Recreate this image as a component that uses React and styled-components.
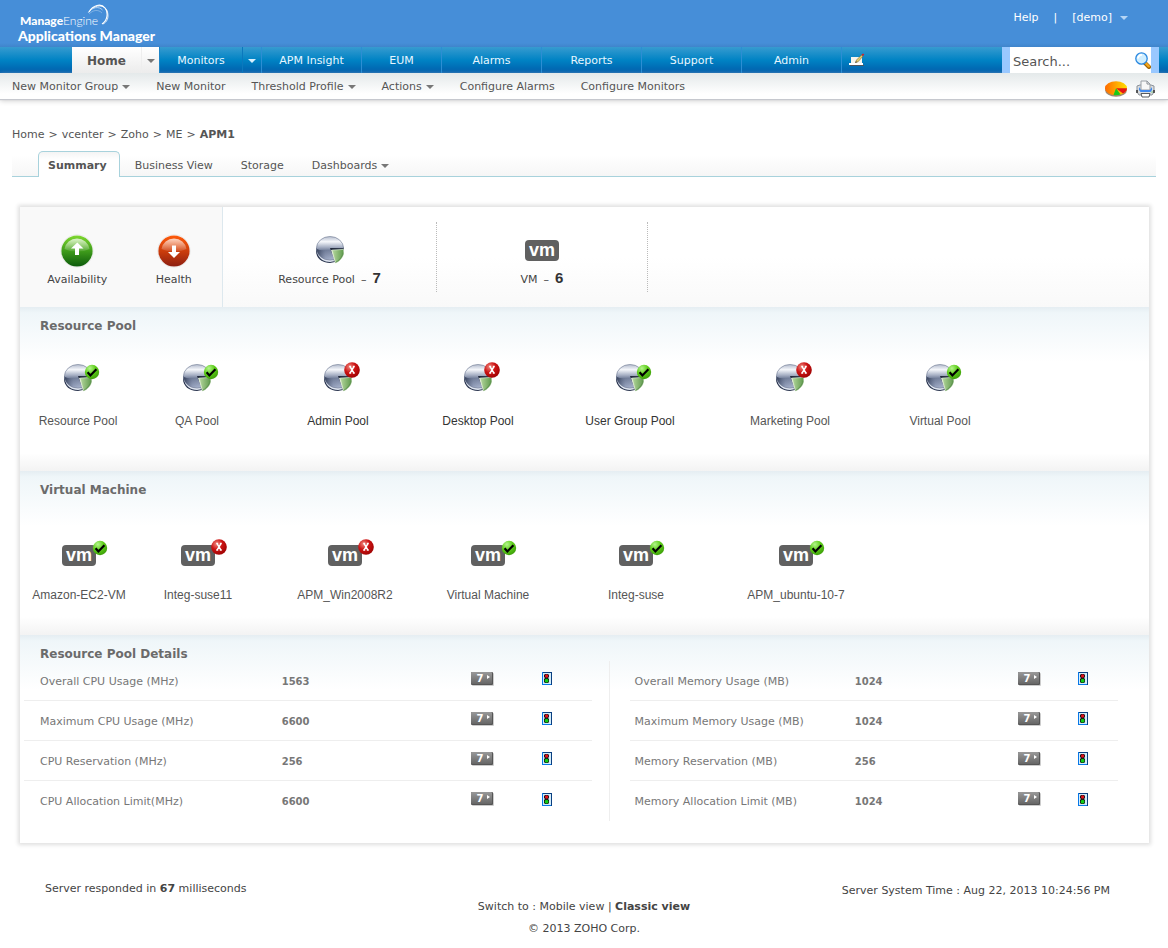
import React from "react";
import styled, { createGlobalStyle, css } from "styled-components";

const sans = `"DejaVu Sans", Verdana, sans-serif`;
const arial = `"Liberation Sans", Arial, sans-serif`;

const GlobalStyle = createGlobalStyle`
  * { box-sizing: border-box; }
  body { margin: 0; background: #fff; color: #555; font: 11px/16px ${sans}; }
  a { color: inherit; text-decoration: none; }
  button { font: inherit; color: inherit; background: none; border: 0; padding: 0; cursor: pointer; }
  svg { display: block; flex: none; }
`;

/* ---------- header ---------- */

const Header = styled.header`
  display: flex;
  justify-content: space-between;
  height: 47px;
  padding: 0 40px 0 18px;
  background: linear-gradient(#468ed8 43px, #3f84cb);
  color: #fff;
`;

const Brand = styled.a`
  position: relative;
  padding-top: 13px;
  font-family: Lato, "Open Sans", sans-serif;
`;

const BrandMaker = styled.div`
  padding-left: 2px;
  font-size: 12px;
  line-height: 15px;
  font-weight: 300;
  b { font-weight: 900; }
`;

const BrandProduct = styled.div`
  font-size: 14px;
  line-height: 16px;
  font-weight: 900;
`;

const Swoosh = styled.svg`
  position: absolute;
  left: 69px;
  top: 4px;
`;

const UserLinks = styled.div`
  display: flex;
  align-items: center;
  gap: 15px;
  height: 35px;
`;

const Split = styled.span`
  display: inline-flex;
  align-items: center;
  gap: ${(p) => p.$gap || 4}px;
`;

const CaretSvg = styled.svg`
  fill: ${(p) => p.$color || "#777"};
`;

const Caret = ({ color }) => (
  <CaretSvg $color={color} width="8" height="4" viewBox="0 0 8 4" aria-hidden="true">
    <path d="M0 0h8L4 4z" />
  </CaretSvg>
);

/* ---------- main navigation ---------- */

const NavBar = styled.nav`
  display: flex;
  height: 26px;
  padding-left: 72px;
  background: linear-gradient(#379bd0, #0083c4 50%, #005dab);
`;

const NavItem = styled.a`
  display: flex;
  align-items: center;
  justify-content: center;
  width: ${(p) => p.$width}px;
  padding-top: 1px;
  color: #e8f6ff;
  ${(p) => p.$line && css`border-right: 1px solid #2c8ed3;`}
  ${(p) =>
    p.$active &&
    css`
      background: linear-gradient(#fff, #ececec);
      color: #555;
      font-size: 12px;
      font-weight: bold;
    `}
`;

const NavCaret = styled.button`
  display: flex;
  align-items: center;
  justify-content: center;
  width: ${(p) => p.$width}px;
  padding-top: 2px;
  border-left: 1px solid ${(p) => (p.$active ? "#eee" : "#0b78bd")};
  border-right: 1px solid ${(p) => (p.$active ? "#1d85c6" : "#2c8ed3")};
  ${(p) => p.$active && css`background: linear-gradient(#fff, #ececec);`}
`;

const NavTool = styled.button`
  display: flex;
  align-items: center;
  padding: 0 7px;
`;

const SearchForm = styled.form`
  display: flex;
  align-items: center;
  width: 157px;
  margin: 0 9px 0 auto;
  border: solid #99c8ff;
  border-width: 0 8px;
  background: #fff;
`;

const SearchInput = styled.input`
  flex: 1;
  min-width: 0;
  height: 26px;
  padding: 3px 3px 0;
  border: 0;
  outline: 0;
  background: transparent;
  color: #555;
  font: 13px/20px ${sans};
  &::placeholder { color: #555; opacity: 1; }
`;

/* ---------- secondary bar ---------- */

const SubBar = styled.div`
  display: flex;
  align-items: center;
  gap: 26px;
  height: 26px;
  padding: 2px 13px 0 12px;
  background: linear-gradient(#e4e9ea, #fff 80%);
  box-shadow: 0 1px 1px #c6c8ce, 0 2px 5px #d0d0d0;
`;

const SubTools = styled.div`
  display: flex;
  align-items: center;
  gap: 9px;
  margin-left: auto;
  padding-top: 3px;
`;

/* ---------- page ---------- */

const Main = styled.main`
  padding: 28px 12px 0;
`;

const Crumbs = styled.nav`
  a::after { content: ">"; margin: 0 4px; }
`;

const TabRow = styled.div`
  display: flex;
  align-items: flex-end;
  height: 26px;
  margin-top: 8px;
  padding-left: 26px;
  border-bottom: 1px solid #a8d2dc;
  background: linear-gradient(#fff 4px, #f6f6f6);
`;

const ActiveTab = styled.a`
  height: 26px;
  margin-bottom: -1px;
  padding: 6px 12px 0 9px;
  border: 1px solid #a8d2dc;
  border-bottom: 0;
  border-radius: 5px 5px 0 0;
  background: linear-gradient(#f4f4f4, #fff 8px);
  font-weight: bold;
`;

const Tabs = styled.div`
  display: flex;
  gap: 28px;
  padding: 0 0 2px 15px;
`;

const Card = styled.article`
  margin: 30px 7px 0 8px;
  background: #fff;
  box-shadow: 0 0 4px 2px #e0e0e0;
`;

const Overview = styled.section`
  display: flex;
  height: 100px;
  background: linear-gradient(#fff 50%, #f9f9f9);
`;

const StatusPane = styled.div`
  display: grid;
  grid-template-columns: 1fr 1fr;
  width: 203px;
  padding: 27px 0 0 9px;
  border-right: 1px solid #dde8ee;
  background: #f9f9f9;
`;

const Stat = styled.div`
  display: flex;
  flex-direction: column;
  align-items: center;
  gap: 4px;
  color: #444;
`;

const StatIcon = styled.div`
  display: flex;
  align-items: center;
  height: 34px;
`;

const CountPane = styled.div`
  width: ${(p) => p.$width}px;
  height: 70px;
  margin-top: 15px;
  padding-top: 11px;
  border-right: 1px dotted #bbb;
`;

const CountLine = styled.div`
  display: flex;
  align-items: baseline;
  gap: 6px;
  b { font: bold 15px/14px ${arial}; color: #333; }
`;

const Section = styled.section`
  padding-top: 12px;
  background: linear-gradient(#e5edf2, #eff6f9 6px, #fff 55px);
`;

const Title = styled.h2`
  margin: 0 0 0 20px;
  font-size: 12px;
  line-height: 14px;
  color: #6b6b6b;
`;

const ItemGrid = styled.ul`
  display: grid;
  grid-template-columns: ${(p) => p.$columns};
  height: ${(p) => p.$height}px;
  margin: 0;
  padding: ${(p) => p.$top}px 0 0;
  list-style: none;
  background: linear-gradient(to top, #f3f3f3, rgba(255, 255, 255, 0) 18px);
`;

const Item = styled.li`
  display: flex;
  flex-direction: column;
  align-items: center;
  gap: ${(p) => p.$gap}px;
  font: 12px/16px ${arial};
  color: ${(p) => (p.$dark ? "#333" : "#555")};
  white-space: nowrap;
`;

const IconHolder = styled.div`
  position: relative;
`;

const BadgeHolder = styled.div`
  position: absolute;
  right: ${(p) => p.$right}px;
  top: ${(p) => p.$top}px;
`;

const Details = styled.div`
  display: flex;
  padding: 0 31px 22px 4px;
`;

const DetailHalf = styled.div`
  flex: ${(p) => p.$share};
  min-width: 0;
  padding: ${(p) => p.$pad};
  ${(p) => p.$line && css`border-right: 1px solid #eee;`}
`;

const Table = styled.table`
  width: 100%;
  table-layout: fixed;
  border-collapse: separate;
  border-spacing: 0;
  color: #777;
`;

const LabelHead = styled.th`
  width: ${(p) => p.$width}%;
  height: 40px;
  padding: 2px 0 0 ${(p) => p.$indent}px;
  text-align: left;
  font-weight: normal;
  border-bottom: ${(p) => (p.$last ? "0" : "1px solid #eee")};
`;

const Cell = styled.td`
  width: ${(p) => p.$width}%;
  height: 40px;
  padding: ${(p) => (p.$icon ? "0 0 4px" : "2px 0 0")};
  font-size: 10px;
  font-weight: bold;
  border-bottom: ${(p) => (p.$last ? "0" : "1px solid #eee")};
  button { display: block; }
`;

const Footer = styled.footer`
  display: grid;
  grid-template-columns: 1fr auto 1fr;
  padding: 38px 58px 10px 45px;
  color: #444;
`;

const FootCenter = styled.div`
  padding: 15px 0 0 13px;
  text-align: center;
  line-height: 22px;
`;

const FootRight = styled.div`
  padding-top: 2px;
  text-align: right;
`;

/* ---------- drawings ---------- */

const DefsSvg = styled.svg`
  position: absolute;
`;

const Gradients = () => (
  <DefsSvg width="0" height="0" aria-hidden="true">
    <defs>
      <linearGradient id="steel" x1="0" y1="0" x2="0" y2="1">
        <stop offset="0" stopColor="#b4bccd" />
        <stop offset=".22" stopColor="#f5f7fb" />
        <stop offset=".45" stopColor="#a7b0c4" />
        <stop offset=".58" stopColor="#75819c" />
        <stop offset="1" stopColor="#aab5cf" />
      </linearGradient>
      <linearGradient id="steelSide" x1="0" x2="1">
        <stop offset="0" stopColor="#1f2a44" stopOpacity=".75" />
        <stop offset=".5" stopColor="#5a6684" stopOpacity=".2" />
        <stop offset="1" stopColor="#8592b0" stopOpacity="0" />
      </linearGradient>
      <linearGradient id="leaf" x1="0" x2="1">
        <stop offset="0" stopColor="#b5d79d" />
        <stop offset="1" stopColor="#5f9a4d" />
      </linearGradient>
      <linearGradient id="greenBall" x1="0" y1="0" x2="0" y2="1">
        <stop offset="0" stopColor="#7fd82f" />
        <stop offset=".5" stopColor="#3f9c1b" />
        <stop offset="1" stopColor="#0c5a0c" />
      </linearGradient>
      <linearGradient id="redBall" x1="0" y1="0" x2="0" y2="1">
        <stop offset="0" stopColor="#ff5a0a" />
        <stop offset=".55" stopColor="#c63a0c" />
        <stop offset="1" stopColor="#8c1f12" />
      </linearGradient>
      <linearGradient id="gloss" x1="0" y1="0" x2="0" y2="1">
        <stop offset="0" stopColor="#fff" stopOpacity=".75" />
        <stop offset="1" stopColor="#fff" stopOpacity=".08" />
      </linearGradient>
      <radialGradient id="okBadge" cx=".35" cy=".25" r=".8">
        <stop offset="0" stopColor="#b4f58c" />
        <stop offset=".5" stopColor="#5ccc18" />
        <stop offset="1" stopColor="#3c9c08" />
      </radialGradient>
      <radialGradient id="badBadge" cx=".35" cy=".3" r=".8">
        <stop offset="0" stopColor="#f08a80" />
        <stop offset=".45" stopColor="#cc1414" />
        <stop offset="1" stopColor="#980000" />
      </radialGradient>
      <linearGradient id="chip" x1="0" y1="0" x2="0" y2="1">
        <stop offset="0" stopColor="#999" />
        <stop offset="1" stopColor="#666" />
      </linearGradient>
      <linearGradient id="citrus" x1="0" x2="1">
        <stop offset="0" stopColor="#ff6a00" />
        <stop offset="1" stopColor="#ffe000" />
      </linearGradient>
    </defs>
  </DefsSvg>
);

const Ball = ({ down }) => (
  <svg width="34" height="34" viewBox="0 0 34 34" aria-hidden="true">
    <circle cx="17" cy="17" r="16.3" fill="#fff" stroke="#ddd" strokeWidth=".6" />
    <circle cx="17" cy="17" r="15.6" fill={down ? "url(#redBall)" : "url(#greenBall)"} />
    <path d="M4.5 15a12.6 12 0 0 1 25 0q-5 2.500-12.500 2.500t-12.500-2.500z" fill="url(#gloss)" />
    <path
      d={down ? "M15 11.500h4v6.500h4l-6 6-6-6h4z" : "M15 21v-6.500h-4l6.300-6 6.200 6H19V21z"}
      fill="#fff"
    />
  </svg>
);

const Pie = () => (
  <svg width="28" height="28" viewBox="0 0 28 28" aria-hidden="true">
    <path d="M0 12v3c0 7 6 12 14 12l5-1 8.500-12V11z" fill="#2b3650" />
    <path d="M1 15.500c1 6.500 6.500 10.500 13 10.500l4-.7-.5-3L14 22z" fill="#dfe5f0" />
    <ellipse cx="14" cy="12.300" rx="13.600" ry="11.800" fill="url(#steel)" stroke="#7c869d" strokeWidth=".7" />
    <path d="M.8 13q6 2.500 13.400 0l4 10.500A13.500 11.500 0 0 1 .8 13z" fill="url(#steelSide)" />
    <path d="M27.600 12.200 14 12l4.500 12 2-.5L16 13.800l11.500-.3z" fill="#20283a" />
    <path d="M18 14.800l-3-1 4.200 13.200 2.300-1z" fill="#f3f8ef" />
    <path d="M16.200 14.200l11.400-.8v4.300c-.8 4-4 7.500-8 9.300z" fill="url(#leaf)" stroke="#d2e6c6" strokeWidth=".7" />
    <path d="M27.500 14.500v3.200c-.8 4-4 7.500-8 9.300l-.3-1c4-2 7.300-5.500 8.300-11.500z" fill="#447b39" opacity=".55" />
  </svg>
);

const VmIcon = () => (
  <svg width="34" height="21" viewBox="0 0 34 21" aria-hidden="true">
    <rect width="34" height="21" rx="4" fill="#606060" />
    <text x="17" y="16" textAnchor="middle" fontFamily="Liberation Sans, Arial, sans-serif" fontWeight="bold" fontSize="18" fill="#fff">
      vm
    </text>
  </svg>
);

const StatusBadge = ({ ok }) =>
  ok ? (
    <svg width="16" height="16" viewBox="0 0 16 16" role="img" aria-label="Up">
      <circle cx="8" cy="8" r="7.200" fill="url(#okBadge)" />
      <path d="M3.600 8.200l2.800 3.200 6-6.200" fill="none" stroke="#000" strokeWidth="2.200" />
    </svg>
  ) : (
    <svg width="16" height="16" viewBox="0 0 16 16" role="img" aria-label="Down">
      <circle cx="8" cy="8" r="7.800" fill="url(#badBadge)" />
      <path d="M5.200 4.500h2M8.800 4.500h2M5.200 11h2M8.800 11h2M6.200 4.800l3.600 6M9.800 4.800l-3.600 6" stroke="#fff" strokeWidth="1.500" />
    </svg>
  );

const SevenDays = () => (
  <svg width="23" height="14" viewBox="0 0 23 14" aria-hidden="true">
    <rect x="1" y="1" width="22" height="13" rx="1" fill="#ccc" />
    <rect width="22" height="13" rx="1" fill="#555" />
    <rect x="0" y="0" width="21" height="12" rx="1" fill="url(#chip)" />
    <text x="9" y="10" textAnchor="middle" fontFamily="DejaVu Sans, sans-serif" fontWeight="bold" fontSize="10" fill="#fff">
      7
    </text>
    <path d="M16 3l3 2-3 2z" fill="#fff" />
  </svg>
);

const TrafficLight = () => (
  <svg width="10" height="13" viewBox="0 0 10 13" aria-hidden="true">
    <rect width="10" height="13" fill="#0a3f80" />
    <path d="M0 0h1v12h8v1H0z" fill="#0878e8" />
    <rect x="1" y="1" width="8" height="11" fill="#d3ecfa" />
    <path d="M3 2h3l1 1v2l-1 1 1 1v3l-1 1H3l-1-1V7l1-1-1-1V3z" fill="#151515" />
    <circle cx="4.600" cy="4" r="1.700" fill="#e0101c" />
    <circle cx="4.600" cy="8.700" r="1.900" fill="#10cc18" />
  </svg>
);

const NotePencil = () => (
  <svg width="16" height="14" viewBox="0 0 16 14" aria-hidden="true">
    <path d="M2 4h11v7H2z" fill="#f5f5ee" />
    <path d="M0 10h14v2H0z" fill="#fff" />
    <path d="M1 12h14v1H1z" fill="#4b5560" />
    <path d="M6.500 9.500l1-2.500 5-5 1.500 1.200L9 8.800z" fill="#e8cf6a" stroke="#5b4a1c" strokeWidth=".5" />
    <path d="M12.500 1.800L14 .5l1.300 1L14 3z" fill="#d0222c" />
    <path d="M6.300 9.800l.6-1.500 1 .9z" fill="#222" />
  </svg>
);

const Magnifier = () => (
  <svg width="16" height="17" viewBox="0 0 16 17" aria-hidden="true">
    <path d="M10 11l4 4" stroke="#9a6206" strokeWidth="4" strokeLinecap="round" />
    <path d="M10.500 11l3.300 3.300" stroke="#f5a61c" strokeWidth="2.400" strokeLinecap="round" />
    <circle cx="6.500" cy="6.500" r="5.700" fill="#cfeeff" stroke="#2a88e0" strokeWidth="1.300" />
    <path d="M3 6.500a3.500 3.500 0 0 1 4-3.500" stroke="#fff" strokeWidth="1.800" fill="none" />
  </svg>
);

const ReportPie = () => (
  <svg width="22" height="16" viewBox="0 0 22 16" aria-hidden="true">
    <ellipse cx="11" cy="9" rx="11" ry="6.800" fill="#9c8b76" />
    <ellipse cx="11" cy="7.300" rx="11" ry="7" fill="url(#citrus)" />
    <path d="M11 7.300h11c0 2-1.500 4-4 5.300z" fill="#e51616" />
    <path d="M11 7.300l4.500 6.200q-3.500 1.200-7 .5z" fill="#18c818" />
  </svg>
);

const PrinterIcon = () => (
  <svg width="19" height="18" viewBox="0 0 19 18" aria-hidden="true">
    <path d="M1 6l3-1h11l3 1v6l-2 3H3l-2-3z" fill="#d9dcdf" stroke="#8b9199" />
    <path d="M5 1h6l3 3v6H5z" fill="#f7f7f7" stroke="#9a9fa6" />
    <path d="M11 1v3h3" fill="none" stroke="#8a8f96" />
    <path d="M3 7l2 3h9l2-3v3l-1.500 2h-10L3 10z" fill="#3f8af0" />
    <path d="M5 13.500h9l-1 3.500H6z" fill="#fff" stroke="#555a60" />
    <path d="M1 10v3M18 10v3" stroke="#333" strokeWidth="1.500" />
    <path d="M15.500 12h1" stroke="#22b02a" />
  </svg>
);

/* ---------- data ---------- */

const menus = [
  ["APM Insight", 100],
  ["EUM", 80],
  ["Alarms", 100],
  ["Reports", 100],
  ["Support", 100],
  ["Admin", 100],
];

const shortcuts = [
  ["New Monitor Group", true],
  ["New Monitor", false],
  ["Threshold Profile", true],
  ["Actions", true],
  ["Configure Alarms", false],
  ["Configure Monitors", false],
];

const pools = [
  { name: "Resource Pool", ok: true },
  { name: "QA Pool", ok: true },
  { name: "Admin Pool", ok: false, dark: true },
  { name: "Desktop Pool", ok: false, dark: true },
  { name: "User Group Pool", ok: true, dark: true },
  { name: "Marketing Pool", ok: false },
  { name: "Virtual Pool", ok: true },
];

const machines = [
  { name: "Amazon-EC2-VM", ok: true },
  { name: "Integ-suse11", ok: false },
  { name: "APM_Win2008R2", ok: false },
  { name: "Virtual Machine", ok: true },
  { name: "Integ-suse", ok: true },
  { name: "APM_ubuntu-10-7", ok: true },
];

const cpu = [
  ["Overall CPU Usage (MHz)", "1563"],
  ["Maximum CPU Usage (MHz)", "6600"],
  ["CPU Reservation (MHz)", "256"],
  ["CPU Allocation Limit(MHz)", "6600"],
];

const memory = [
  ["Overall Memory Usage (MB)", "1024"],
  ["Maximum Memory Usage (MB)", "1024"],
  ["Memory Reservation (MB)", "256"],
  ["Memory Allocation Limit (MB)", "1024"],
];

const DetailTable = ({ rows, widths, indent }) => (
  <Table>
    <tbody>
      {rows.map(([label, value], i) => {
        const last = i === rows.length - 1;
        return (
          <tr key={label}>
            <LabelHead scope="row" $width={widths[0]} $indent={indent} $last={last}>{label}</LabelHead>
            <Cell $width={widths[1]} $last={last}>{value}</Cell>
            <Cell $width={widths[2]} $last={last} $icon>
              <button type="button" aria-label="7 day report"><SevenDays /></button>
            </Cell>
            <Cell $width={widths[3]} $last={last} $icon>
              <button type="button" aria-label="Configure threshold"><TrafficLight /></button>
            </Cell>
          </tr>
        );
      })}
    </tbody>
  </Table>
);

export default function App() {
  return (
    <>
      <GlobalStyle />
      <Gradients />
      <Header>
        <Brand href="#">
          <BrandMaker><b>Manage</b>Engine</BrandMaker>
          <BrandProduct>Applications Manager</BrandProduct>
          <Swoosh width="22" height="22" viewBox="0 0 22 22" fill="none" stroke="#fff" aria-hidden="true">
            <path d="M2 8C6 1 14-1 18 4s2 13-3 16" strokeWidth="1.200" />
            <path d="M1 9C5 3 12 2 15.500 6" strokeWidth=".7" opacity=".8" />
            <path d="M6 4c6-4 13-2 14.500 4S20 18 16 20" strokeWidth=".9" opacity=".9" />
            <path d="M2 10c4-4 9-5 13-1" strokeWidth=".5" opacity=".6" />
          </Swoosh>
        </Brand>
        <UserLinks>
          <a href="#">Help</a>
          <span>|</span>
          <Split as="button" type="button" $gap={8}>[demo] <Caret color="#b5d5f5" /></Split>
        </UserLinks>
      </Header>

      <NavBar>
        <NavItem href="#" $width={69} $active>Home</NavItem>
        <NavCaret type="button" aria-label="Home menu" $width={19} $active><Caret /></NavCaret>
        <NavItem href="#" $width={82}>Monitors</NavItem>
        <NavCaret type="button" aria-label="Monitors menu" $width={20}><Caret color="#d9f0ff" /></NavCaret>
        {menus.map(([name, width]) => (
          <NavItem key={name} href="#" $width={width} $line>{name}</NavItem>
        ))}
        <NavTool type="button" aria-label="Customize tabs"><NotePencil /></NavTool>
        <SearchForm role="search">
          <SearchInput type="text" aria-label="Search" placeholder="Search..." />
          <button type="submit" aria-label="Search"><Magnifier /></button>
        </SearchForm>
      </NavBar>

      <SubBar>
        {shortcuts.map(([name, menu]) => (
          <Split as="a" key={name} href="#">{name}{menu && <Caret />}</Split>
        ))}
        <SubTools>
          <button type="button" aria-label="Reports"><ReportPie /></button>
          <button type="button" aria-label="Print"><PrinterIcon /></button>
        </SubTools>
      </SubBar>

      <Main>
        <Crumbs aria-label="Breadcrumb">
          <a href="#">Home</a><a href="#">vcenter</a><a href="#">Zoho</a><a href="#">ME</a><b>APM1</b>
        </Crumbs>
        <TabRow>
          <ActiveTab href="#">Summary</ActiveTab>
          <Tabs>
            <a href="#">Business View</a>
            <a href="#">Storage</a>
            <Split as="a" href="#">Dashboards<Caret /></Split>
          </Tabs>
        </TabRow>

        <Card>
          <Overview>
            <StatusPane>
              <Stat><StatIcon><Ball /></StatIcon>Availability</Stat>
              <Stat><StatIcon><Ball down /></StatIcon>Health</Stat>
            </StatusPane>
            <CountPane $width={214}>
              <Stat>
                <StatIcon><Pie /></StatIcon>
                <CountLine>Resource Pool <span>–</span> <b>7</b></CountLine>
              </Stat>
            </CountPane>
            <CountPane $width={211}>
              <Stat>
                <StatIcon><VmIcon /></StatIcon>
                <CountLine>VM <span>–</span> <b>6</b></CountLine>
              </Stat>
            </CountPane>
          </Overview>

          <Section>
            <Title>Resource Pool</Title>
            <ItemGrid $columns="116fr 122fr 160fr 120fr 184fr 136fr 164fr 127fr" $height={138} $top={31}>
              {pools.map((p) => (
                <Item key={p.name} $dark={p.dark} $gap={21}>
                  <IconHolder>
                    <Pie />
                    <BadgeHolder $right={-8} $top={p.ok ? 0 : -2}><StatusBadge ok={p.ok} /></BadgeHolder>
                  </IconHolder>
                  {p.name}
                </Item>
              ))}
            </ItemGrid>
          </Section>

          <Section>
            <Title>Virtual Machine</Title>
            <ItemGrid $columns="118fr 120fr 174fr 112fr 184fr 136fr 285fr" $height={138} $top={48}>
              {machines.map((m) => (
                <Item key={m.name} $gap={21}>
                  <IconHolder>
                    <VmIcon />
                    <BadgeHolder $right={-12} $top={m.ok ? -5 : -6}><StatusBadge ok={m.ok} /></BadgeHolder>
                  </IconHolder>
                  {m.name}
                </Item>
              ))}
            </ItemGrid>
          </Section>

          <Section>
            <Title>Resource Pool Details</Title>
            <Details>
              <DetailHalf $share="588 1 0" $pad="0 17px 0 0" $line>
                <DetailTable rows={cpu} widths={[45.4, 33.3, 12.6, 8.7]} indent={16} />
              </DetailHalf>
              <DetailHalf $share="506 1 0" $pad="0 0 0 20px">
                <DetailTable rows={memory} widths={[46.1, 33.4, 12.3, 8.2]} indent={5} />
              </DetailHalf>
            </Details>
          </Section>
        </Card>
      </Main>

      <Footer>
        <div>Server responded in <b>67</b> milliseconds</div>
        <FootCenter>
          <div>Switch to : <a href="#">Mobile view</a> | <a href="#"><b>Classic view</b></a></div>
          <div>© 2013 ZOHO Corp.</div>
        </FootCenter>
        <FootRight>Server System Time : Aug 22, 2013 10:24:56 PM</FootRight>
      </Footer>
    </>
  );
}
